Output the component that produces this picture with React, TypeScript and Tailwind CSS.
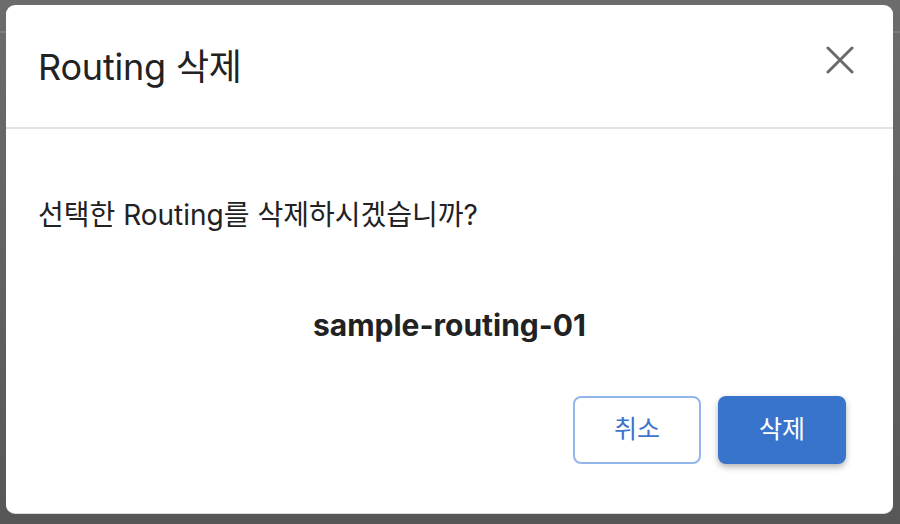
import React from "react";

export default function App() {
  const font = { fontFamily: 'Inter, "Noto Sans CJK KR", "Noto Sans", sans-serif' };
  return (
    <div
      className="w-[900px] h-[524px] overflow-hidden flex flex-col bg-[linear-gradient(to_bottom,#6c6c6c,#575757)]"
      style={font}
    >
      <div className="relative h-0">
        <div className="absolute top-[31px] left-0 w-[900px] h-[2px] bg-[#7c7c7c]" />
      </div>
      <div className="pt-[5px] pl-[6px] relative">
        <div className="w-[887px] h-[508px] bg-white rounded-[9px] flex flex-col shadow-[0_1px_0_#dcdcdc]">
          <div className="h-[124px] flex items-center justify-between pl-[32px] pr-[39px] border-b-2 border-[#e2e2e2]">
            <h1 className="text-[36px] leading-none text-[#222] tracking-[-0.2px] mt-[1px]">Routing 삭제</h1>
            <button className="w-[28px] h-[28px] flex items-center justify-center mb-[13px]">
              <svg width="28" height="28" viewBox="0 0 28 28">
                <path d="M2 2 L26 26 M26 2 L2 26" stroke="#6b6b6b" strokeWidth="3" strokeLinecap="round" />
              </svg>
            </button>
          </div>
          <div className="flex flex-col px-[32px]">
            <p className="mt-[68px] text-[28px] leading-[36px] text-[#222]">선택한 Routing를 삭제하시겠습니까?</p>
            <p className="mt-[74px] text-center font-bold text-[30px] leading-[36px] text-[#222]">sample-routing-01</p>
            <div className="mt-[53px] flex justify-end gap-[17px] pr-[15px]">
              <button className="w-[128px] h-[68px] rounded-[8px] border-2 border-[#93b6ea] text-[#3a74cb] text-[25px] bg-white">
                취소
              </button>
              <button className="w-[128px] h-[68px] rounded-[8px] bg-[#3874cb] text-white text-[25px] shadow-[0_3px_6px_rgba(0,0,0,0.3)]">
                삭제
              </button>
            </div>
          </div>
        </div>
      </div>
    </div>
  );
}
